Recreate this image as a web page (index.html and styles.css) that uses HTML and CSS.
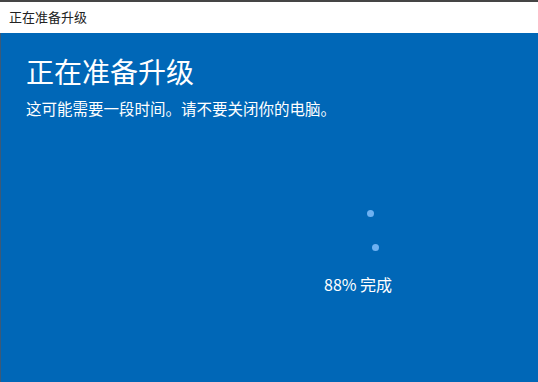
FILE: index.html
```html
<!DOCTYPE html>
<html lang="zh-CN">
  <head>
    <meta charset="UTF-8" />
    <meta name="viewport" content="width=device-width, initial-scale=1.0" />
    <title>正在准备升级</title>
    <link rel="stylesheet" href="styles.css">
  </head>
  <body>
    <div class="cua_so">
      <div class="thanh_tieu_de">正在准备升级</div>
      <div class="noi_dung">
        <h1 class="tieu_de">正在准备升级</h1>
        <p class="mo_ta">这可能需要一段时间。请不要关闭你的电脑。</p>
        <div class="tien_trinh">
          <span class="cham cham_1"></span>
          <span class="cham cham_2"></span>
          <div class="phan_tram">88% 完成</div>
        </div>
      </div>
    </div>
  </body>
</html>
```

FILE: styles.css
```css
* {
  box-sizing: border-box;
  padding: 0;
  margin: 0;
}
body {
  font-family: "Noto Sans CJK SC", "Liberation Sans", sans-serif;
  width: 538px;
  height: 382px;
  overflow: hidden;
}
.cua_so {
  height: 382px;
  border-top: 2px solid #454545;
  display: flex;
  flex-direction: column;
}
.thanh_tieu_de {
  height: 31px;
  background-color: #fff;
  color: #222;
  font-size: 13px;
  line-height: 30px;
  padding-left: 9px;
}
.noi_dung {
  flex: 1;
  background-color: #0067b7;
  border-left: 1px solid #3c5a78;
  color: #fff;
  padding: 18px 0 0 25px;
}
.tieu_de {
  font-size: 28px;
  font-weight: normal;
  line-height: 40px;
}
.mo_ta {
  font-size: 15.5px;
  line-height: 20px;
  margin-top: 7px;
}
.tien_trinh {
  position: relative;
  height: 200px;
}
.cham {
  position: absolute;
  width: 7px;
  height: 7px;
  border-radius: 50%;
  background-color: #6db1f2;
}
.cham_1 {
  left: 341px;
  top: 92px;
}
.cham_2 {
  left: 346px;
  top: 126px;
}
.phan_tram {
  position: absolute;
  left: 298px;
  top: 156px;
  font-size: 16px;
  line-height: 20px;
}
```
